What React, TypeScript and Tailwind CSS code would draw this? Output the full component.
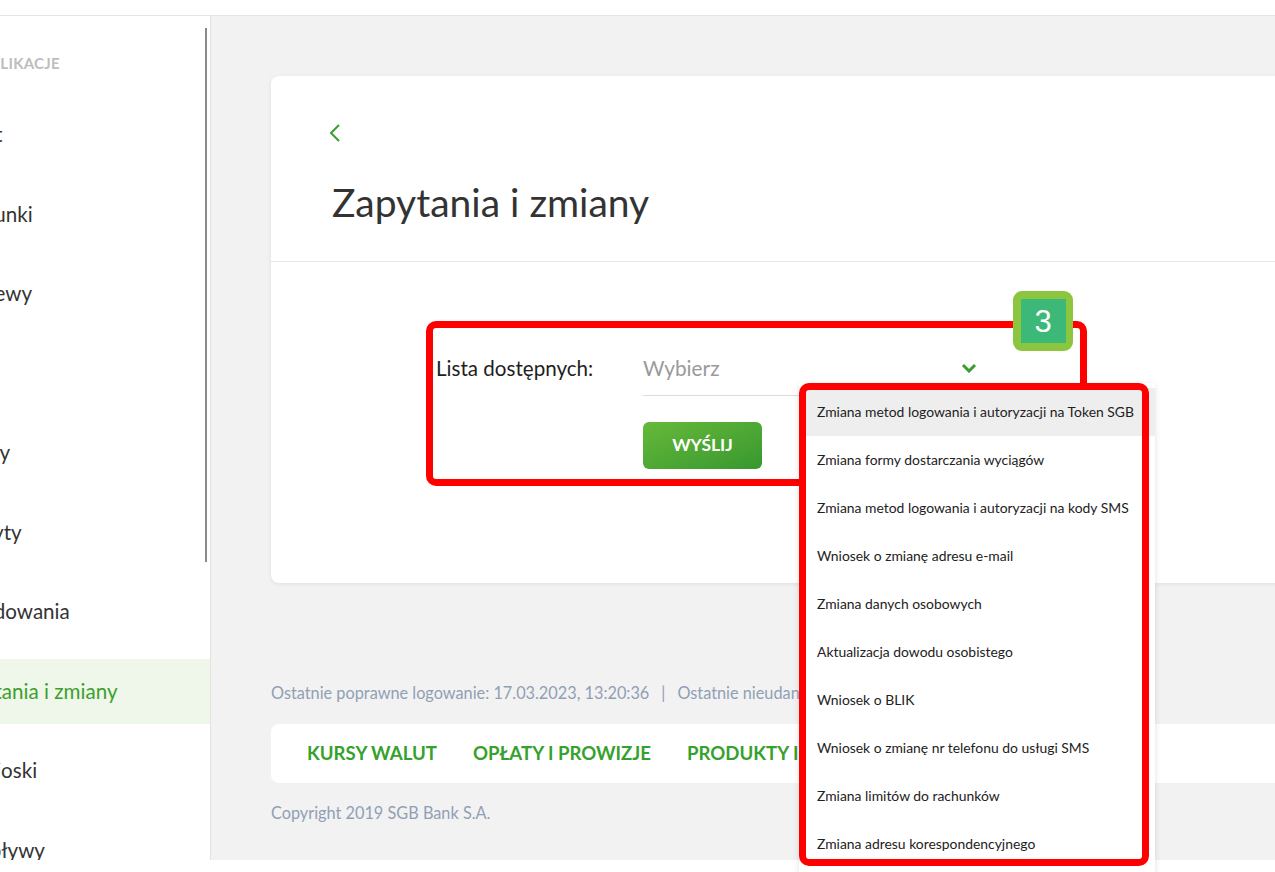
import React from "react";

const sideItems: [string, string][] = [
  ["Pulpit", "-ml-[50px]"],
  ["Rachunki", "-ml-[50px]"],
  ["Przelewy", "-ml-[50px]"],
  ["Karty", "-ml-[50px]"],
  ["Lokaty", "-ml-[50px]"],
  ["Kredyty", "-ml-[50px]"],
  ["Doładowania", "-ml-[50px]"],
  ["Zapytania i zmiany", "-ml-[50px]"],
  ["E-Wnioski", "-ml-[55px]"],
  ["Przepływy", "-ml-[50px]"],
];

const options = [
  "Zmiana metod logowania i autoryzacji na Token SGB",
  "Zmiana formy dostarczania wyciągów",
  "Zmiana metod logowania i autoryzacji na kody SMS",
  "Wniosek o zmianę adresu e-mail",
  "Zmiana danych osobowych",
  "Aktualizacja dowodu osobistego",
  "Wniosek o BLIK",
  "Wniosek o zmianę nr telefonu do usługi SMS",
  "Zmiana limitów do rachunków",
  "Zmiana adresu korespondencyjnego",
];

export default function App() {
  return (
    <div
      className="relative w-[1275px] h-[872px] overflow-hidden bg-white"
      style={{ fontFamily: "Lato, 'Open Sans', sans-serif" }}
    >
      {/* top bar */}
      <div className="h-[16px] border-b border-[#e4e4e4] bg-white" />

      <div className="flex h-[844px]">
        {/* sidebar */}
        <aside className="relative w-[211px] shrink-0 overflow-hidden border-r border-[#e2e2e2] bg-white">
          <div className="pt-[38px] -ml-[20px] whitespace-nowrap text-[15px] font-bold leading-[18px] tracking-[0.3px] text-[#bdbdbd]">
            APLIKACJE
          </div>
          <div className="mt-[30px] flex flex-col gap-[14.5px]">
            {sideItems.map(([t, off]) => {
              const active = t === "Zapytania i zmiany";
              return (
                <div
                  key={t}
                  className={`flex h-[65px] items-center whitespace-nowrap ${
                    active ? "bg-[#eff6ea] text-[#3d9f2a]" : "text-[#333333]"
                  }`}
                >
                  <span className={`${off} text-[20.6px]`}>{t}</span>
                </div>
              );
            })}
          </div>
          {/* scrollbar */}
          <div className="absolute left-[205px] top-[12px] h-[534px] w-[2px] bg-[#8a8a8a]" />
        </aside>

        {/* main */}
        <main className="flex-1 overflow-hidden bg-[#f2f2f2] pl-[60px] pt-[60px]">
          <div className="w-[1100px] h-[507px] rounded-[8px] bg-white shadow-[0_1px_4px_rgba(0,0,0,0.08)]">
            <div className="h-[186px] border-b border-[#e6e6e6] pl-[56px] pt-[47px]">
              <svg width="14" height="20" viewBox="0 0 14 20" className="ml-[1px]">
                <path d="M11 2 L3 10 L11 18" fill="none" stroke="#3a9d2f" strokeWidth="2" />
              </svg>
              <h1 className="ml-[5px] mt-[39px] text-[39px] leading-[40px] font-normal text-[#333333]">
                Zapytania i zmiany
              </h1>
            </div>
            <div className="pl-[165px] pt-[91px]">
              <div className="flex items-start">
                <div className="w-[207px] text-[20.6px] leading-[30px] text-[#1e1e1e]">Lista dostępnych:</div>
                <div className="flex flex-col">
                  <div className="flex h-[43px] w-[342px] items-start justify-between border-b border-[#dcdcdc]">
                    <span className="text-[20.8px] leading-[30px] text-[#9a9a9a]">Wybierz</span>
                    <svg width="16" height="10" viewBox="0 0 16 10" className="mr-[8px] mt-[10px]">
                      <path d="M2 2 L8 8 L14 2" fill="none" stroke="#3a9d2f" strokeWidth="3" />
                    </svg>
                  </div>
                  <button className="mt-[26px] h-[47px] w-[119px] rounded-[6px] bg-gradient-to-br from-[#66b93a] to-[#36982f] text-[17.5px] font-bold text-white">
                    WYŚLIJ
                  </button>
                </div>
              </div>
            </div>
          </div>

          {/* footer */}
          <div className="mt-[100px] whitespace-nowrap text-[16.3px] leading-[20px] text-[#919fb5]">
            Ostatnie poprawne logowanie: 17.03.2023, 13:20:36
            <span className="mx-[12px]">|</span>
            Ostatnie nieudane logowanie: 15.03.2023, 09:12:05
          </div>
          <div className="mt-[21px] flex h-[59px] w-[1100px] items-center gap-[36px] rounded-[8px] bg-white pl-[36px] whitespace-nowrap text-[18.6px] font-bold text-[#36a12c]">
            <span>KURSY WALUT</span>
            <span>OPŁATY I PROWIZJE</span>
            <span>PRODUKTY I USŁUGI</span>
            <span>KONTAKT</span>
          </div>
          <div className="mt-[20px] text-[16.3px] leading-[20px] text-[#919fb5]">Copyright 2019 SGB Bank S.A.</div>
        </main>
      </div>

      {/* annotation: red frame around form */}
      <div className="absolute left-[426px] top-[321px] h-[165px] w-[661px] rounded-[10px] border-[7px] border-[#ff0000]" />

      {/* badge 3 */}
      <div className="absolute left-[1013px] top-[291px] flex h-[60px] w-[60px] items-center justify-center rounded-[9px] bg-[#8cc63f]">
        <div
          className="flex h-[44px] w-[45px] items-center justify-center bg-[#3cb878] text-[31px] leading-none text-white"
          style={{ fontFamily: "'Liberation Sans', Arial, sans-serif" }}
        >
          3
        </div>
      </div>

      {/* dropdown menu */}
      <div className="absolute left-[799px] top-[383px] h-[500px] w-[356px] bg-white shadow-[0_2px_6px_rgba(0,0,0,0.12)]">
        <div className="pt-[5px]">
          {options.map((o, i) => (
            <div
              key={o}
              className={`flex h-[48px] items-center whitespace-nowrap pl-[18px] text-[13.9px] text-[#222222] ${
                i === 0 ? "bg-[#eeeeee]" : ""
              }`}
            >
              {o}
            </div>
          ))}
        </div>
      </div>
      {/* annotation: red frame around dropdown */}
      <div className="absolute left-[799px] top-[383px] h-[483px] w-[350px] rounded-[10px] border-[7px] border-[#ff0000]" />
    </div>
  );
}
